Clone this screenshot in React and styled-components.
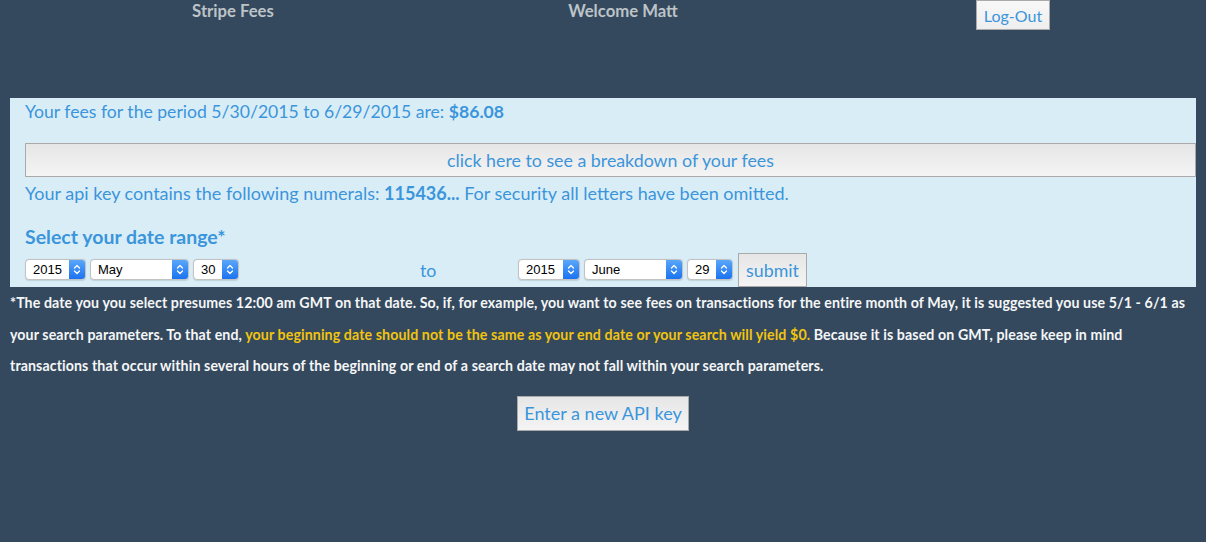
import React from "react";
import styled, { createGlobalStyle } from "styled-components";

const Global = createGlobalStyle`
  html, body { margin: 0; padding: 0; background: #34495e; }
  body { font-family: Lato, "Open Sans", sans-serif; }
`;

const Page = styled.div`
  width: 1206px;
  height: 542px;
  background: #34495e;
  overflow: hidden;
`;

const Header = styled.header`
  display: grid;
  grid-template-columns: repeat(3, 390px);
  padding-left: 38px;
  height: 98px;
  align-items: start;
`;

const HeaderText = styled.div`
  text-align: center;
  color: #bdc3c7;
  font-weight: 700;
  font-size: 16.7px;
  line-height: 22px;
`;

const HeaderCell = styled.div`
  display: flex;
  justify-content: center;
`;

const GreyButton = styled.button`
  font-family: Lato, sans-serif;
  color: #3b95db;
  background: linear-gradient(#e6e6e6, #f4f4f4);
  border: 1px solid #aaaaaa;
  border-radius: 0;
  padding: 0;
  cursor: pointer;
  font-size: ${(p) => p.$size || 17}px;
  width: ${(p) => (p.$w ? `${p.$w}px` : "auto")};
  height: ${(p) => p.$h || 34}px;
`;

const LogOut = styled(GreyButton)`
  background: linear-gradient(#f8f8f8, #eeeeee);
`;

const Panel = styled.section`
  margin: 0 10px;
  background: #d9edf7;
  padding: 0 0 0 15px;
  height: 189px;
  box-sizing: border-box;
  color: #3b95db;
`;

const Line = styled.p`
  margin: 0;
  font-size: ${(p) => p.$size || 17.8}px;
  line-height: ${(p) => p.$lh || 26}px;
  padding-top: ${(p) => p.$pt || 0}px;
  font-weight: ${(p) => (p.$bold ? 700 : 400)};
`;

const BreakdownWrap = styled.div`
  padding-top: 17px;
  line-height: 0;
`;

const DateRow = styled.div`
  display: grid;
  grid-template-columns: 395px 98px auto;
  align-items: center;
  height: 34px;
  margin-top: 2px;
`;

const SelectGroup = styled.div`
  display: flex;
  align-items: center;
  gap: 4px;
  margin-top: -2px;
`;

const To = styled.span`
  font-size: 17.8px;
  color: #3b95db;
`;

const SelectBox = styled.div`
  display: flex;
  width: ${(p) => p.$w}px;
  height: 21px;
  box-sizing: border-box;
  border: 1px solid #c2c2c2;
  border-radius: 4px;
  background: #fff;
  overflow: hidden;
  box-shadow: 0 0.5px 1px rgba(0,0,0,0.12);
`;

const NativeSelect = styled.select`
  appearance: none;
  -webkit-appearance: none;
  border: none;
  outline: none;
  background: transparent;
  flex: 1;
  min-width: 0;
  font-family: "Liberation Sans", Arial, sans-serif;
  font-size: 13px;
  color: #000;
  padding: 0 0 0 7px;
  margin: 0;
  height: 19px;
`;

const Arrows = styled.span`
  width: 16px;
  flex: none;
  background: linear-gradient(#5aa6fb, #1a73f0);
  display: flex;
  align-items: center;
  justify-content: center;
`;

const Submit = styled(GreyButton)`
  margin-left: 1px;
  margin-top: 2px;
  width: 69px;
  height: 34px;
  font-size: 17.8px;
`;

const Footnote = styled.p`
  margin: 0;
  padding: 0 10px;
  color: #f4f6f7;
  font-size: 14.2px;
  line-height: 31.5px;
  font-weight: 700;
  letter-spacing: 0.1px;
`;

const Warn = styled.span`
  color: #f1c40f;
`;

const Center = styled.div`
  display: flex;
  justify-content: center;
  padding-top: 14px;
`;

function Chevrons() {
  return (
    <svg width="8" height="13" viewBox="0 0 8 13">
      <path d="M1.5 5 L4 2.5 L6.5 5 M1.5 8 L4 10.5 L6.5 8" fill="none" stroke="#fff" strokeWidth="1.3" strokeLinecap="round" strokeLinejoin="round" />
    </svg>
  );
}

function Select({ w, value, options }) {
  return (
    <SelectBox $w={w}>
      <NativeSelect defaultValue={value}>
        {options.map((o) => (
          <option key={o}>{o}</option>
        ))}
      </NativeSelect>
      <Arrows>
        <Chevrons />
      </Arrows>
    </SelectBox>
  );
}

const years = ["2013", "2014", "2015"];
const months = ["January","February","March","April","May","June","July","August","September","October","November","December"];
const days = Array.from({ length: 31 }, (_, i) => String(i + 1));

export default function App() {
  return (
    <Page>
      <Global />
      <Header>
        <HeaderText>Stripe Fees</HeaderText>
        <HeaderText>Welcome Matt</HeaderText>
        <HeaderCell>
          <LogOut $w={74} $h={30} $size={16}>Log-Out</LogOut>
        </HeaderCell>
      </Header>
      <Panel>
        <Line $lh={28} $size={17.6}>
          Your fees for the period 5/30/2015 to 6/29/2015 are: <b>$86.08</b>
        </Line>
        <BreakdownWrap>
          <GreyButton $w={1171} $h={34} $size={17.8}>click here to see a breakdown of your fees</GreyButton>
        </BreakdownWrap>
        <Line $pt={3} $size={18}>
          Your api key contains the following numerals: <b>115436...</b> For security all letters have been omitted.
        </Line>
        <Line $bold $pt={17} $lh={28} $size={19.5}>Select your date range*</Line>
        <DateRow>
          <SelectGroup>
            <Select w={61} value="2015" options={years} />
            <Select w={99} value="May" options={months} />
            <Select w={46} value="30" options={days} />
          </SelectGroup>
          <To>to</To>
          <SelectGroup>
            <Select w={62} value="2015" options={years} />
            <Select w={99} value="June" options={months} />
            <Select w={46} value="29" options={days} />
            <Submit>submit</Submit>
          </SelectGroup>
        </DateRow>
      </Panel>
      <Footnote>
        *The date you you select presumes 12:00 am GMT on that date. So, if, for example, you want to see fees on transactions for the entire month of May, it is suggested you use 5/1 - 6/1 as your search parameters. To that end, <Warn>your beginning date should not be the same as your end date or your search will yield $0.</Warn> Because it is based on GMT, please keep in mind transactions that occur within several hours of the beginning or end of a search date may not fall within your search parameters.
      </Footnote>
      <Center>
        <GreyButton $w={172} $h={35} $size={18}>Enter a new API key</GreyButton>
      </Center>
    </Page>
  );
}
